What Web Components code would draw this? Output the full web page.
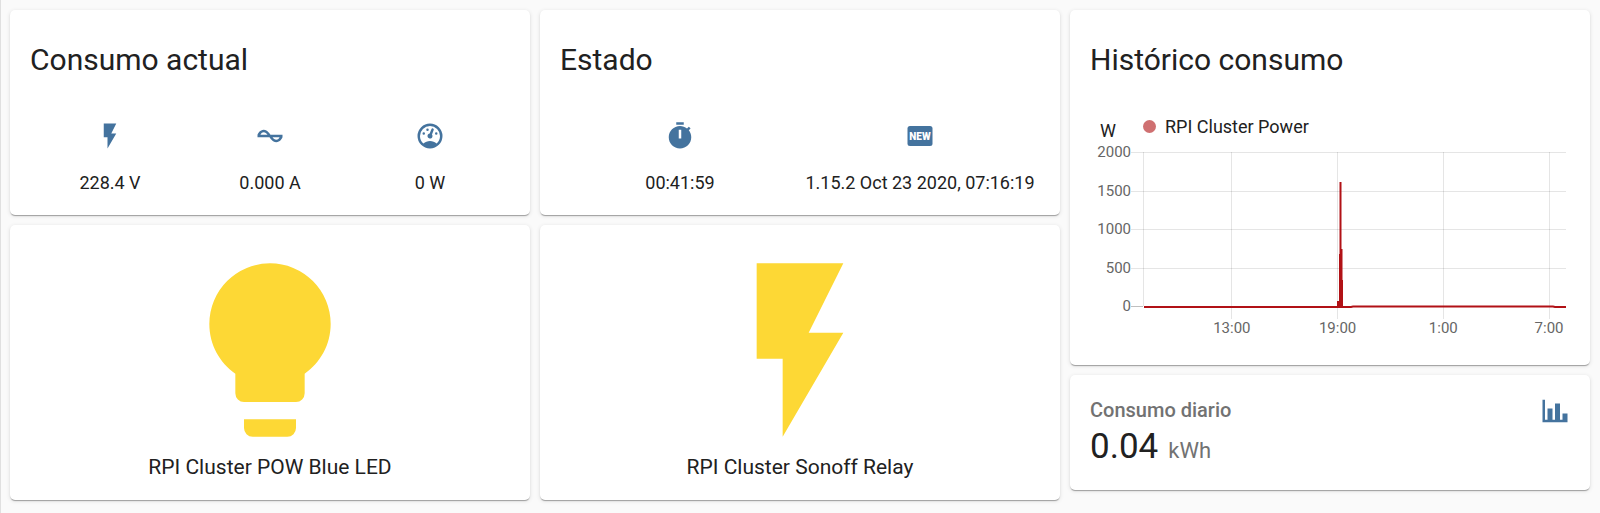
<!DOCTYPE html>
<html lang="es">
<head>
<meta charset="utf-8">
<title>RPI Cluster</title>
<style>
  html { background: #fafafa; }
  body {
    margin: 0;
    min-height: 100vh;
    box-sizing: border-box;
    border-left: 1px solid #e0e0e0;
    font-family: Roboto, "Liberation Sans", sans-serif;
    font-size: 18px;
    line-height: 25px;
    color: #212121;
  }
</style>
</head>
<body>
<energy-dashboard>
  <dash-column>
    <dash-card heading="Consumo actual">
      <glance-row>
        <glance-item icon="flash">228.4 V</glance-item>
        <glance-item icon="current-ac">0.000 A</glance-item>
        <glance-item icon="gauge">0 W</glance-item>
      </glance-row>
    </dash-card>
    <dash-card><toggle-button icon="lightbulb">RPI Cluster POW Blue LED</toggle-button></dash-card>
  </dash-column>
  <dash-column>
    <dash-card heading="Estado">
      <glance-row>
        <glance-item icon="timer">00:41:59</glance-item>
        <glance-item icon="new-box">1.15.2 Oct 23 2020, 07:16:19</glance-item>
      </glance-row>
    </dash-card>
    <dash-card><toggle-button icon="flash">RPI Cluster Sonoff Relay</toggle-button></dash-card>
  </dash-column>
  <dash-column>
    <dash-card heading="Histórico consumo">
      <history-chart unit="W">RPI Cluster Power</history-chart>
    </dash-card>
    <dash-card><sensor-value icon="chart-bar" value="0.04" unit="kWh">Consumo diario</sensor-value></dash-card>
  </dash-column>
</energy-dashboard>

<script>
const ICONS = {
  'flash': '<path d="M7,2V13H10V22L17,10H13L17,2H7Z"/>',
  'current-ac': '<path d="M12.43 11C12.28 10.84 10 7 7 7S2.32 10.18 2 11V13H11.57C11.72 13.16 14 17 17 17S21.68 13.82 22 13V11H12.43M7 9C8.17 9 9.18 9.85 10 11H4.31C4.78 10.17 5.54 9 7 9M17 15C15.83 15 14.82 14.15 14 13H19.69C19.22 13.83 18.46 15 17 15Z"/>',
  'gauge': '<path d="M12,2A10,10 0 0,0 2,12A10,10 0 0,0 12,22A10,10 0 0,0 22,12A10,10 0 0,0 12,2M12,4A8,8 0 0,1 20,12C20,14.4 19,16.5 17.3,18C15.9,16.7 14,16 12,16C10,16 8.2,16.7 6.7,18C5,16.5 4,14.4 4,12A8,8 0 0,1 12,4M14,5.89C13.62,5.9 13.26,6.15 13.1,6.54L11.81,9.77L11.71,10C11,10.13 10.41,10.6 10.14,11.26C9.73,12.29 10.23,13.45 11.26,13.86C12.29,14.27 13.45,13.77 13.86,12.74C14.12,12.08 14,11.32 13.57,10.76L13.67,10.5L14.96,7.29L14.97,7.26C15.17,6.75 14.92,6.17 14.41,5.96C14.28,5.91 14.15,5.89 14,5.89M10,6A1,1 0 0,0 9,7A1,1 0 0,0 10,8A1,1 0 0,0 11,7A1,1 0 0,0 10,6M7,9A1,1 0 0,0 6,10A1,1 0 0,0 7,11A1,1 0 0,0 8,10A1,1 0 0,0 7,9M17,9A1,1 0 0,0 16,10A1,1 0 0,0 17,11A1,1 0 0,0 18,10A1,1 0 0,0 17,9Z"/>',
  'timer': '<path d="M19.03 7.39L20.45 5.97C20 5.46 19.55 5 19.04 4.56L17.62 6C16.07 4.74 14.12 4 12 4C7.03 4 3 8.03 3 13S7.03 22 12 22C17 22 21 17.97 21 13C21 10.88 20.26 8.93 19.03 7.39M13 14H11V7H13V14M15 1H9V3H15V1Z"/>',
  'new-box': '<rect x="2" y="4" width="20" height="16" rx="2"/><text x="12" y="15" text-anchor="middle" font-size="8" font-weight="900" fill="#fff">NEW</text>',
  'lightbulb': '<path d="M12,2A7,7 0 0,0 5,9C5,11.38 6.19,13.47 8,14.74V17A1,1 0 0,0 9,18H15A1,1 0 0,0 16,17V14.74C17.81,13.47 19,11.38 19,9A7,7 0 0,0 12,2M9,21A1,1 0 0,0 10,22H14A1,1 0 0,0 15,21V20H9V21Z"/>',
  'chart-bar': '<path d="M22,21H2V3H4V19H6V10H10V19H12V6H16V19H18V14H22V21Z"/>'
};

class Base extends HTMLElement {
  constructor() {
    super();
    this.attachShadow({ mode: 'open' });
  }
  connectedCallback() {
    this.shadowRoot.innerHTML = `<style>${this.styles()}</style>${this.markup()}`;
  }
  attr(name) { return this.getAttribute(name) || ''; }
}

customElements.define('mdi-icon', class extends Base {
  styles() { return `
    :host { display: block; width: 30px; height: 30px; color: #44739e; }
    svg { display: block; width: 100%; height: 100%; fill: currentColor; }`; }
  markup() { return `<svg viewBox="0 0 24 24" aria-hidden="true">${ICONS[this.attr('name')]}</svg>`; }
});

customElements.define('energy-dashboard', class extends Base {
  styles() { return `
    :host {
      display: grid;
      grid-template-columns: repeat(3, minmax(0, 1fr));
      gap: 10px;
      padding: 10px 10px 10px 9px;
    }`; }
  markup() { return `<slot></slot>`; }
});

customElements.define('dash-column', class extends Base {
  styles() { return `:host { display: flex; flex-direction: column; gap: 10px; }`; }
  markup() { return `<slot></slot>`; }
});

customElements.define('dash-card', class extends Base {
  styles() { return `
    :host {
      display: block;
      background: #fff;
      border-radius: 5px;
      box-shadow: 0 2px 1px -1px rgba(0,0,0,.2), 0 1px 1px 0 rgba(0,0,0,.14), 0 1px 4px 0 rgba(0,0,0,.12);
    }
    h1 {
      margin: 0;
      padding: 20px 20px 0;
      font-size: 30px;
      line-height: 60px;
      font-weight: 400;
    }`; }
  markup() {
    const heading = this.attr('heading');
    return `${heading ? `<h1>${heading}</h1>` : ''}<slot></slot>`;
  }
});

customElements.define('glance-row', class extends Base {
  styles() { return `
    :host { display: grid; grid-auto-flow: column; grid-auto-columns: minmax(0, 1fr); padding: 31px 20px 20px; }`; }
  markup() { return `<slot></slot>`; }
});

customElements.define('glance-item', class extends Base {
  styles() { return `
    :host { display: flex; flex-direction: column; align-items: center; gap: 19px; white-space: nowrap; }`; }
  markup() { return `<mdi-icon name="${this.attr('icon')}"></mdi-icon><span><slot></slot></span>`; }
});

customElements.define('toggle-button', class extends Base {
  styles() { return `
    :host { display: block; }
    button {
      display: flex;
      flex-direction: column;
      align-items: center;
      width: 100%;
      margin: 0;
      padding: 21px 0 20px;
      border: 0;
      background: none;
      font: inherit;
      font-size: 21px;
      line-height: 26px;
      color: inherit;
      cursor: pointer;
    }
    mdi-icon { width: 40%; height: auto; aspect-ratio: 1; color: #fdd835; }`; }
  markup() { return `<button type="button"><mdi-icon name="${this.attr('icon')}"></mdi-icon><span><slot></slot></span></button>`; }
});

customElements.define('sensor-value', class extends Base {
  styles() { return `
    :host { display: block; padding: 21px 20px 22px; }
    header { display: flex; justify-content: space-between; align-items: flex-start; }
    .name { padding-top: 2px; font-size: 20px; font-weight: 500; color: #727272; }
    .value { font-size: 35px; line-height: 42px; }
    .unit { margin-left: 10px; font-size: 22px; line-height: 25px; color: #727272; }`; }
  markup() { return `
    <header><span class="name"><slot></slot></span><mdi-icon name="${this.attr('icon')}"></mdi-icon></header>
    <div class="value">${this.attr('value')}<span class="unit">${this.attr('unit')}</span></div>`; }
});

customElements.define('history-chart', class extends Base {
  styles() { return `
    :host { display: block; padding: 24px 24px 46px 73px; }
    .legend { display: flex; align-items: center; gap: 9px; }
    .dot { width: 13px; height: 13px; border-radius: 50%; background: #cf7071; }
    .plot { display: block; width: 100%; height: 167px; margin-top: 13px; overflow: visible; }
    .grid { stroke: #000; stroke-opacity: .1; shape-rendering: crispEdges; }
    .zero { stroke-opacity: .25; }
    .label { font-size: 15px; fill: #666; }
    .unit { fill: #212121; }
    .series path { fill: none; stroke: #b11116; stroke-width: 2; vector-effect: non-scaling-stroke; }`; }
  markup() {
    // Plot area is 154px tall between the 2000 and 0 lines.
    const ys = [[2000, 0], [1500, 39], [1000, 77], [500, 116], [0, 154]];
    const xs = [['13:00', 21], ['19:00', 46], ['1:00', 71], ['7:00', 96]];
    const rows = ys.map(([v, y]) => `
      <line class="grid${v ? '' : ' zero'}" x1="-12" x2="${v ? '100%' : '0'}" y1="${y + .5}" y2="${y + .5}"/>
      <text class="label" x="-12" y="${y + 5}" text-anchor="end">${v}</text>`).join('');
    const cols = xs.map(([t, x]) => `
      <line class="grid" x1="${x}%" x2="${x}%" y1="0" y2="167"/>
      <text class="label" x="${x}%" y="181" text-anchor="middle">${t}</text>`).join('');
    return `
      <div class="legend"><span class="dot"></span><span><slot></slot></span></div>
      <svg class="plot" role="img" aria-label="Histórico">
        <text class="unit" x="-43" y="-15">${this.attr('unit')}</text>
        ${rows}
        <line class="grid" x1="0.5" x2="0.5" y1="0" y2="154"/>
        ${cols}
        <svg class="series" width="100%" height="167" viewBox="0 0 423 167" preserveAspectRatio="none" overflow="visible">
          <path d="M1,155H195V150H196V155H197V102V155H197.5V30V155H198.5V97V155H199V128V155"/>
          <path d="M200,155H208L210,154.5H410L412,155H423"/>
        </svg>
      </svg>`;
  }
});
</script>
</body>
</html>
